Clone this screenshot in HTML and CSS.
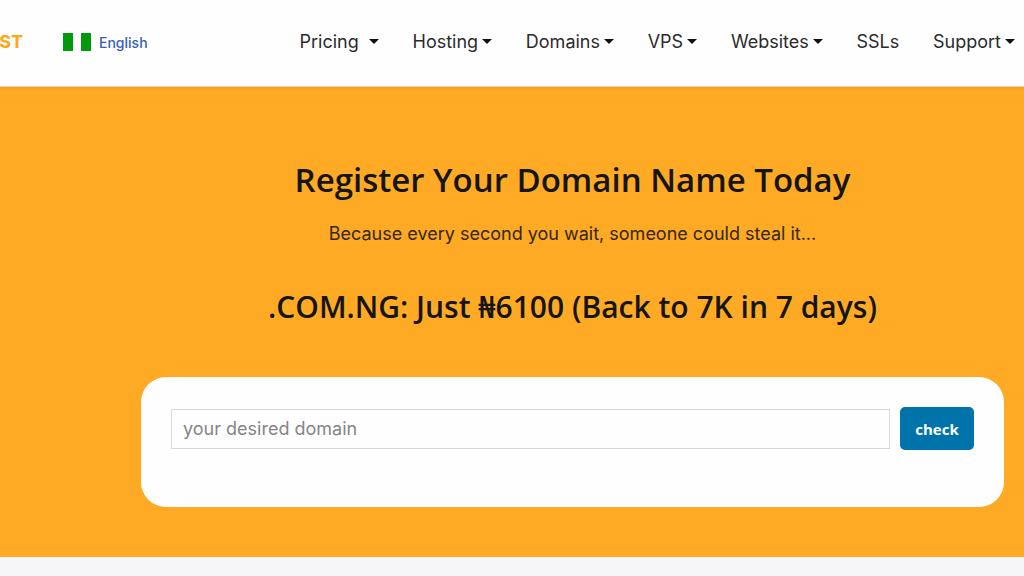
FILE: index.html
```html
<!DOCTYPE html>
<html lang="en">
<head>
<meta charset="utf-8">
<meta name="viewport" content="width=device-width, initial-scale=1">
<title>Register Your Domain Name Today</title>
<link rel="stylesheet" href="styles.css">
</head>
<body>
<header class="header">
  <a class="logo" href="#">ST</a>
  <a class="language" href="#">
    <svg class="flag" viewBox="0 0 28 18" aria-hidden="true"><path fill="#fff" d="M0 0h28v18H0z"/><path fill="#009a0c" d="M0 0h10v18H0zM18 0h10v18H18z"/></svg>
    English
  </a>
  <nav class="nav">
    <a class="nav-link spaced" href="#">Pricing<span class="caret"></span></a>
    <a class="nav-link" href="#">Hosting<span class="caret"></span></a>
    <a class="nav-link" href="#">Domains<span class="caret"></span></a>
    <a class="nav-link" href="#">VPS<span class="caret"></span></a>
    <a class="nav-link" href="#">Websites<span class="caret"></span></a>
    <a class="nav-link" href="#">SSLs</a>
    <a class="nav-link" href="#">Support<span class="caret"></span></a>
  </nav>
</header>
<main class="hero">
  <h1 class="title">Register Your Domain Name Today</h1>
  <p class="subtitle">Because every second you wait, someone could steal it...</p>
  <h2 class="offer">.COM.NG: Just ₦6100 (Back to 7K in 7 days)</h2>
  <form class="search">
    <input class="search-input" type="text" placeholder="your desired domain" aria-label="your desired domain">
    <button class="search-button" type="button">check</button>
  </form>
</main>
</body>
</html>
```
FILE: styles.css
```css
* { box-sizing: border-box; }
body {
  margin: 0;
  background: #f6f6f9;
  color: #1a1a1a;
  font-family: Inter, "Noto Sans", sans-serif;
  font-size: 18px;
}
a { color: inherit; text-decoration: none; }
.header {
  display: flex;
  align-items: center;
  padding: 28px 9px 30px 0;
  background: #fefefe;
  border-bottom: 1px solid #f2d3a0;
}
.logo {
  display: flex;
  justify-content: flex-end;
  width: 23px;
  margin-right: 40px;
  color: #ffa510;
  font-size: 18px;
  font-weight: 700;
  line-height: 28px;
}
.language {
  display: flex;
  align-items: center;
  gap: 8px;
  margin-right: 152px;
  color: #3460b5;
  font-size: 14px;
  font-weight: 500;
}
.flag { width: 28px; height: 18px; }
.nav { display: flex; flex: 1; justify-content: space-between; }
.nav-link {
  display: flex;
  align-items: center;
  gap: 4px;
  color: #2b2b2b;
  line-height: 28px;
}
.spaced { gap: 10px; }
.caret {
  margin-bottom: 2px;
  border: 5px solid transparent;
  border-top-color: #111;
  border-bottom: 0;
}
.hero {
  padding: 68px 20px 50px 141px;
  background: linear-gradient(#f2a11f, #ffaa24 4px);
  text-align: center;
}
.title, .offer {
  margin: 0;
  color: #151515;
  font-family: "Open Sans", "Noto Sans", sans-serif;
  font-weight: 600;
}
.title { font-size: 33px; line-height: 50px; }
.subtitle { margin: 16px 0 40px; color: #332711; font-size: 18px; line-height: 26px; }
.offer { margin-bottom: 50px; font-size: 30px; line-height: 40px; }
.search {
  display: flex;
  align-items: center;
  gap: 10px;
  min-height: 130px;
  padding: 30px 30px 57px;
  background: #fefefe;
  border-radius: 25px;
}
.search-input {
  flex: 1;
  min-width: 0;
  height: 40px;
  padding: 0 11px;
  background: #fefefe;
  border: 1px solid #d9d9d9;
  font: inherit;
}
.search-input::placeholder { color: #858585; opacity: 1; }
.search-button {
  width: 74px;
  height: 43px;
  padding: 0;
  background: #0073aa;
  border: 0;
  border-radius: 5px;
  color: #fff;
  font: 700 15px "Open Sans", "Noto Sans", sans-serif;
}
```
